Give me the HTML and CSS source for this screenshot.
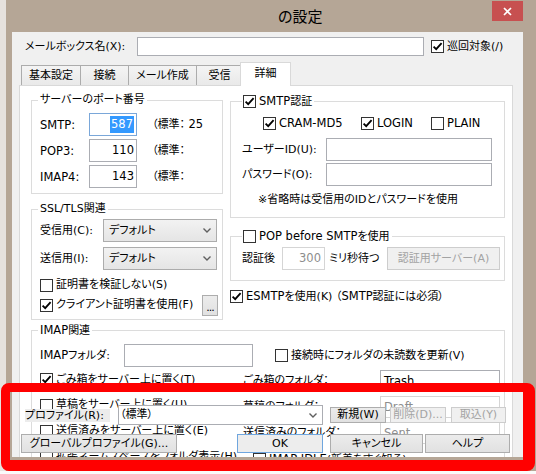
FILE: index.html
```html
<!DOCTYPE html>
<html lang="ja">
<head>
<meta charset="utf-8">
<title>の設定</title>
<link rel="stylesheet" href="styles.css">
</head>
<body>
<div class="screen">
  <div class="window">
    <div class="titlebar">
      <span class="title">の設定</span>
      <div class="close"><svg width="9" height="9" viewBox="0 0 9 9"><path d="M1 1 L8 8 M8 1 L1 8" stroke="#fff" stroke-width="1.7" fill="none"/></svg></div>
    </div>
    <div class="client">
      <div class="mailbox-row">
        <span class="mb-label">メールボックス名(X):</span>
        <div class="tb mb-input"></div>
        <span class="cb mb-check"><span class="box"><svg width="11" height="11" viewBox="0 0 11 11"><path d="M1.6 5.6 L4.2 8.2 L9.6 2.2" fill="none" stroke="#000" stroke-width="1.8"/></svg></span><span>巡回対象(/)</span></span>
      </div>
      <div class="tabs">
        <div class="tab t1">基本設定</div>
        <div class="tab t2">接続</div>
        <div class="tab t3">メール作成</div>
        <div class="tab t4">受信</div>
        <div class="tab tab-sel">詳細</div>
      </div>
      <div class="panel">
        <div class="cols">
          <div class="col-left">
            <fieldset class="grp ports">
              <legend>サーバーのポート番号</legend>
              <div class="port-row"><span class="pl lat">SMTP:</span><div class="tb num focus lat"><span class="sel">587</span></div><span class="std">（標準： <span class="lat">25</span></span></div>
              <div class="port-row"><span class="pl lat">POP3:</span><div class="tb num lat">110</div><span class="std">（標準：</span></div>
              <div class="port-row"><span class="pl lat">IMAP4:</span><div class="tb num lat">143</div><span class="std">（標準：</span></div>
            </fieldset>
            <fieldset class="grp ssl">
              <legend>SSL/TLS関連</legend>
              <div class="ssl-row"><span class="sl">受信用(C):</span><div class="combo"><span>デフォルト</span><svg width="8" height="5" viewBox="0 0 8 5"><path d="M0.5 0.5 L4 4 L7.5 0.5" fill="none" stroke="#606060" stroke-width="1.4"/></svg></div></div>
              <div class="ssl-row second"><span class="sl">送信用(I):</span><div class="combo"><span>デフォルト</span><svg width="8" height="5" viewBox="0 0 8 5"><path d="M0.5 0.5 L4 4 L7.5 0.5" fill="none" stroke="#606060" stroke-width="1.4"/></svg></div></div>
              <div class="cb-row"><span class="cb"><span class="box"></span><span>証明書を検証しない(S)</span></span></div>
              <div class="cert-row"><span class="cb"><span class="box"><svg width="11" height="11" viewBox="0 0 11 11"><path d="M1.6 5.6 L4.2 8.2 L9.6 2.2" fill="none" stroke="#000" stroke-width="1.8"/></svg></span><span>クライアント証明書を使用(F)</span></span><button class="btn dots">...</button></div>
            </fieldset>
          </div>
          <div class="col-right">
            <fieldset class="grp auth">
              <legend><span class="cb"><span class="box"><svg width="11" height="11" viewBox="0 0 11 11"><path d="M1.6 5.6 L4.2 8.2 L9.6 2.2" fill="none" stroke="#000" stroke-width="1.8"/></svg></span><span><span class="lat">SMTP</span>認証</span></span></legend>
              <div class="methods">
                <span class="cb m-cram"><span class="box"><svg width="11" height="11" viewBox="0 0 11 11"><path d="M1.6 5.6 L4.2 8.2 L9.6 2.2" fill="none" stroke="#000" stroke-width="1.8"/></svg></span><span class="lat">CRAM-MD5</span></span>
                <span class="cb m-login"><span class="box"><svg width="11" height="11" viewBox="0 0 11 11"><path d="M1.6 5.6 L4.2 8.2 L9.6 2.2" fill="none" stroke="#000" stroke-width="1.8"/></svg></span><span class="lat">LOGIN</span></span>
                <span class="cb"><span class="box"></span><span class="lat">PLAIN</span></span>
              </div>
              <div class="auth-row first"><span class="al">ユーザーID(U):</span><div class="tb auth-input"></div></div>
              <div class="auth-row"><span class="al">パスワード(O):</span><div class="tb auth-input"></div></div>
              <div class="note">※省略時は受信用のIDとパスワードを使用</div>
            </fieldset>
            <fieldset class="grp pop">
              <legend><span class="cb"><span class="box"></span><span><span class="lat">POP before SMTP</span>を使用</span></span></legend>
              <div class="pop-row"><span class="popl">認証後</span><div class="tb num dis wait lat">300</div><span class="ms">ミリ秒待つ</span><button class="btn dis authsrv">認証用サーバー(A)</button></div>
            </fieldset>
            <div class="esmtp"><span class="cb"><span class="box"><svg width="11" height="11" viewBox="0 0 11 11"><path d="M1.6 5.6 L4.2 8.2 L9.6 2.2" fill="none" stroke="#000" stroke-width="1.8"/></svg></span><span><span class="lat">ESMTP</span>を使用(K) （<span class="lat">SMTP</span>認証には必須）</span></span></div>
          </div>
        </div>
        <fieldset class="grp imap">
          <legend><span class="lat">IMAP</span>関連</legend>
          <div class="imap-row1"><span class="il"><span class="lat">IMAP</span>フォルダ:</span><div class="tb imap-folder"></div><span class="cb upd"><span class="box"></span><span>接続時にフォルダの未読数を更新(V)</span></span></div>
          <div class="imap-row r2"><span class="ileft"><span class="cb"><span class="box"><svg width="11" height="11" viewBox="0 0 11 11"><path d="M1.6 5.6 L4.2 8.2 L9.6 2.2" fill="none" stroke="#000" stroke-width="1.8"/></svg></span><span>ごみ箱をサーバー上に置く(T)</span></span></span><span class="fl">ごみ箱のフォルダ：</span><div class="tb fbox lat">Trash</div></div>
          <div class="imap-row"><span class="ileft"><span class="cb"><span class="box"></span><span>草稿をサーバー上に置く(U)</span></span></span><span class="fl">草稿のフォルダ：</span><div class="tb fbox dis lat">Draft</div></div>
          <div class="imap-row"><span class="ileft"><span class="cb"><span class="box"></span><span>送信済みをサーバー上に置く(E)</span></span></span><span class="fl">送信済みのフォルダ：</span><div class="tb fbox dis lat">Sent</div></div>
          <div class="imap-row"><span class="ileft ext"><span class="cb"><span class="box"></span><span>拡張ネームスペースをフォルダ表示(H)</span></span></span><span class="cb"><span class="box"></span><span><span class="lat">IMAP IDLE</span>(新着をすぐ知る)</span></span></div>
        </fieldset>
      </div>
    </div>
  </div>
  <div class="callout">
    <div class="profile-row">
      <span class="pf-label">プロファイル(R):</span>
      <div class="pf-select"><span>（標準）</span><svg width="8" height="5" viewBox="0 0 8 5"><path d="M0.5 0.5 L4 4 L7.5 0.5" fill="none" stroke="#606060" stroke-width="1.4"/></svg></div>
      <button class="btn sm b-new">新規(W)</button>
      <button class="btn sm dis b-del">削除(D)...</button>
      <button class="btn sm dis b-imp">取込(Y)</button>
    </div>
    <div class="button-row">
      <button class="btn b-global">グローバルプロファイル(G)...</button>
      <button class="btn b-ok lat">OK</button>
      <button class="btn b-cancel">キャンセル</button>
      <button class="btn b-help">ヘルプ</button>
    </div>
  </div>
</div>
</body>
</html>
```
FILE: styles.css
```css
* { box-sizing: border-box; }
html, body { margin: 0; padding: 0; }
body {
  width: 536px; height: 474px; overflow: hidden;
  font-family: "DejaVu Sans", "Noto Sans CJK JP", sans-serif;
  font-size: 11px; line-height: 16px; color: #000;
  font-feature-settings: "palt";
}
.lat { font-size: 11.5px; }
.screen {
  position: relative; width: 536px; height: 474px; overflow: hidden;
  background:
    linear-gradient(to bottom, transparent 471px, #fafafa 471px),
    linear-gradient(to right, #e6e2de 0 6px, #b5a696 6px);
}
.window { margin-left: 6px; width: 524px; }
.titlebar { height: 32px; display: flex; align-items: flex-start; }
.title {
  margin-left: 272px; margin-top: 6px;
  font-family: "Noto Sans CJK JP", sans-serif; font-size: 15px; line-height: 20px;
}
.close {
  margin-left: auto; margin-right: 7px; margin-top: 1px;
  width: 31px; height: 20px; background: #c75050;
  display: flex; align-items: center; justify-content: center;
}
.client { margin-left: 6px; width: 511px; height: 425px; background: #f0f0f0; overflow: hidden; }

/* generic controls */
.tb { background: #fff; border: 1px solid #abadb3; height: 23px; }
.tb.dis { border-color: #d5d5d5; color: #8d8d8d; }
.cb { display: inline-flex; align-items: center; gap: 3px; height: 16px; white-space: nowrap; }
.box {
  width: 13px; height: 13px; border: 1px solid #333; background: #fff;
  display: inline-flex; align-items: center; justify-content: center; flex: none;
}
.btn {
  font: inherit; color: #000; padding: 0; margin: 0;
  border: 1px solid #adadad; background: linear-gradient(#ececec, #e1e1e1);
  display: flex; align-items: center; justify-content: center; white-space: nowrap;
}
.btn.dis { color: #a3a3a3; border-color: #cdcdcd; background: #f0f0f0; }

/* mailbox row */
.mailbox-row { display: flex; align-items: center; height: 19px; margin-top: 5px; padding-left: 13px; }
.mb-label { width: 112px; white-space: nowrap; }
.mb-input { width: 287px; height: 19px; }
.mb-check { margin-left: 7px; }

/* tabs */
.tabs {
  display: flex; align-items: flex-end; height: 23px; margin-top: 6px; padding-left: 9px;
  position: relative; z-index: 1;
}
.tab {
  height: 20px; border: 1px solid #acacac; border-bottom: none;
  background: linear-gradient(#f4f4f4, #e9e9e9);
  margin-left: -1px; text-align: center; line-height: 19px; white-space: nowrap;
}
.t1 { width: 60px; margin-left: 0; }
.t2 { width: 49px; }
.t3 { width: 69px; }
.t4 { width: 47px; }
.tab-sel {
  width: 51px; height: 24px; margin-left: -3px; margin-bottom: -1px;
  background: #fff; border-color: #d9d9d9; line-height: 22px;
}

/* panel */
.panel {
  margin-left: 7px; width: 494px; height: 400px; background: #fff;
  border: 1px solid #d9d9d9; padding: 6px 0 0 11px;
}
.cols { display: flex; gap: 7px; align-items: flex-start; height: 228px; }
.col-left { width: 192px; }
.col-right { width: 275px; }

.grp { margin: 0; border: 1px solid #dcdcdc; min-width: 0; }
.grp legend { padding: 0 2px; margin-left: -2px; line-height: 16px; height: 16px; white-space: nowrap; }

/* ports */
.ports { padding: 5px 4px 5px 8px; }
.port-row { display: flex; align-items: center; height: 23px; }
.port-row + .port-row { margin-top: 3px; }
.pl { width: 49px; }
.num { width: 48px; text-align: right; padding-right: 2px; line-height: 21px; }
.num.focus { border-color: #7aa7d9; }
.sel { background: #3399ff; color: #fff; display: inline-block; line-height: 17px; padding: 0 1px; }
.std { margin-left: 15px; white-space: nowrap; }

/* ssl */
.ssl { margin-top: 7px; padding: 2px 4px 3px 8px; }
.ssl-row { display: flex; align-items: center; height: 23px; }
.ssl-row.second { margin-top: 5px; }
.sl { width: 63px; }
.combo {
  width: 114px; height: 23px; border: 1px solid #acacac;
  background: linear-gradient(#f2f2f2, #e5e5e5);
  display: flex; align-items: center; justify-content: space-between; padding: 0 5px 0 5px;
}
.cb-row { margin-top: 7px; height: 16px; display: flex; align-items: center; }
.cert-row { margin-top: 1px; height: 22px; display: flex; align-items: center; }
.dots { margin-left: auto; width: 16px; height: 21px; align-items: flex-end; line-height: 14px; letter-spacing: -1px; }

/* smtp auth */
.auth { margin-top: 1px; padding: 6px 4px 9px 11px; }
.auth legend, .pop legend { margin-left: 0; padding: 0 2px 0 1px; }
.methods { display: flex; align-items: center; height: 16px; padding-left: 21px; }
.m-cram { width: 98px; }
.m-login { width: 70px; }
.auth-row { display: flex; align-items: center; height: 23px; margin-top: 2px; }
.auth-row.first { margin-top: 7px; }
.al { width: 84px; white-space: nowrap; }
.auth-input { width: 166px; }
.note { margin-top: 6px; padding-left: 16px; white-space: nowrap; }

/* pop */
.pop { margin-top: 10px; padding: 3px 4px 10px 11px; }
.pop-row { display: flex; align-items: center; height: 23px; }
.popl { width: 40px; }
.wait { width: 43px; padding-right: 3px; }
.ms { margin-left: 4px; }
.authsrv { margin-left: auto; width: 113px; height: 23px; }

.esmtp { margin-top: 7px; height: 16px; display: flex; align-items: center; }

/* imap */
.imap { margin-top: 2px; width: 474px; padding: 6px 4px 0 8px; }
.imap-row1 { display: flex; align-items: center; height: 23px; }
.il { width: 84px; }
.imap-folder { width: 129px; }
.upd { margin-left: 22px; }
.imap-row { display: flex; align-items: center; height: 22px; margin-top: 4px; }
.imap-row.r2 { margin-top: 3px; }
.ileft { width: 203px; }
.ileft.ext { width: 213px; }
.fl { width: 137px; white-space: nowrap; }
.fbox { width: 120px; height: 22px; padding-left: 3px; line-height: 20px; }

/* red callout with overlaid controls */
.callout {
  position: absolute; left: 1px; top: 383px; width: 534px; height: 88px;
  border-style: solid; border-color: #ff0000; border-width: 9px 12px 11px 9px;
  border-radius: 8px;
}
.profile-row { display: flex; align-items: center; height: 20px; margin-top: 13px; }
.pf-label {
  margin-left: 15px; width: 85px; height: 13px; line-height: 13px;
  background: #ececec; white-space: nowrap;
}
.pf-select {
  margin-left: 8px; width: 205px; height: 20px; background: #fff;
  border: 1px solid #abadb3; display: flex; align-items: center; justify-content: space-between;
  padding: 0 5px 0 1px;
}
.sm { height: 16px; }
.b-new { margin-left: 7px; width: 56px; }
.b-del { margin-left: 4px; width: 56px; }
.b-imp { margin-left: 5px; width: 55px; }
.button-row { display: flex; align-items: center; height: 19px; margin-top: 9px; }
.button-row .btn { height: 19px; }
.b-global { margin-left: 11px; width: 156px; }
.b-ok { margin-left: 60px; width: 86px; border-color: #6fa6de; background: #ededed; }
.b-cancel { margin-left: 7px; width: 93px; }
.b-help { margin-left: 2px; width: 85px; }
```
